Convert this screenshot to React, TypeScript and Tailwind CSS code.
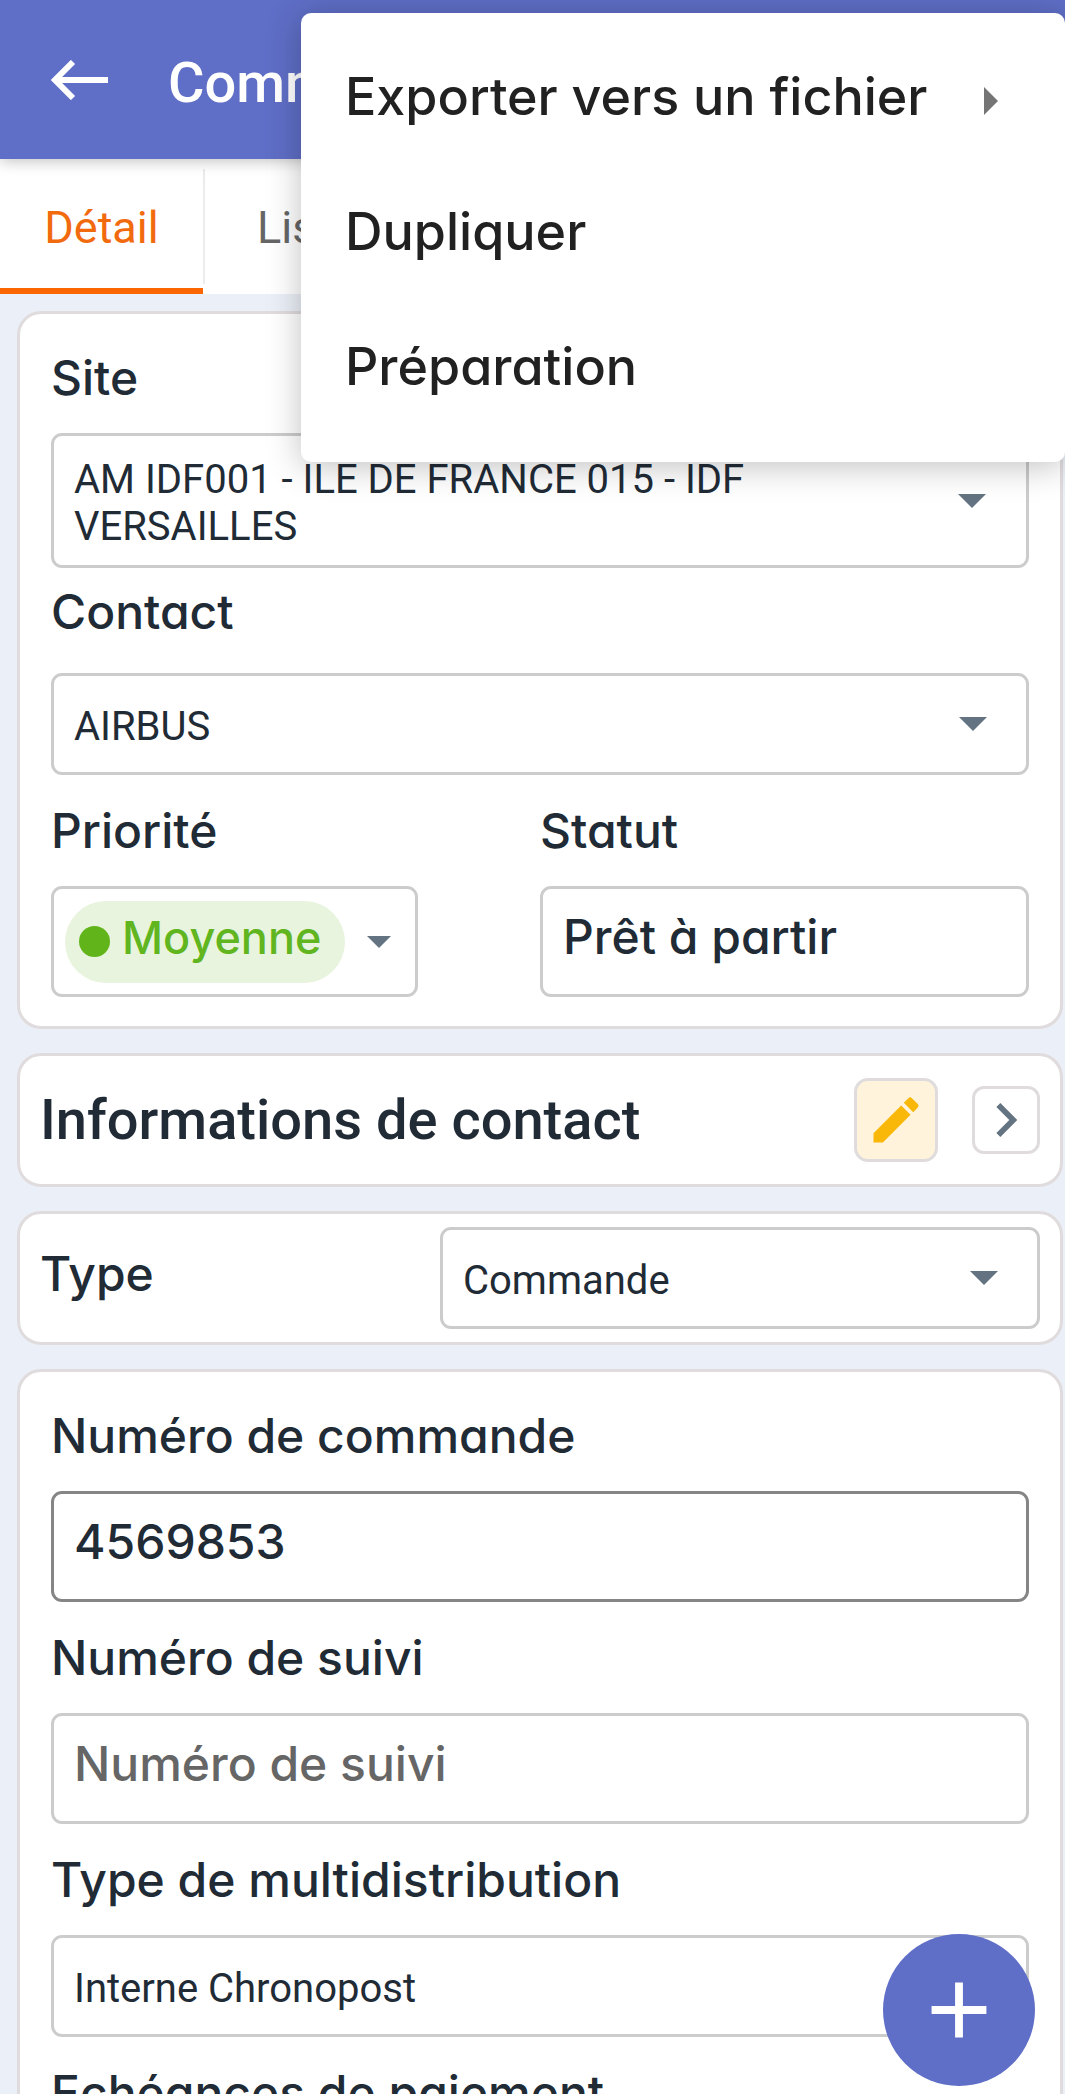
import { ReactNode } from "react";
import { clsx } from "clsx";
import { MdAdd, MdEdit } from "react-icons/md";

const fieldBox = "w-full rounded-[11px] border-3 border-[#cccccc] bg-white text-[#212b36]";
const inputText = "font-[Inter,sans-serif] text-[48px] font-medium [font-feature-settings:'cv11']";

function Caret({ className }: { className?: string }) {
  return (
    <svg
      viewBox="0 0 28 14"
      aria-hidden="true"
      className={clsx("pointer-events-none text-[#637381]", className ?? "h-[14px] w-7")}
    >
      <path d="M0 0h28L14 14z" fill="currentColor" />
    </svg>
  );
}

function Card({ children, className }: { children: ReactNode; className?: string }) {
  return (
    <section className={clsx("rounded-3xl border-3 border-[#e0dcde] bg-white", className)}>
      {children}
    </section>
  );
}

interface LabelProps {
  htmlFor: string;
  children: ReactNode;
  className?: string;
}

function Label({ htmlFor, children, className }: LabelProps) {
  return (
    <label
      htmlFor={htmlFor}
      className={clsx(inputText, "block leading-[64px] text-[#212b36]", className ?? "pt-6 pb-[23px]")}
    >
      {children}
    </label>
  );
}

function Select({ id, options }: { id: string; options: string[] }) {
  return (
    <div className="relative flex items-center">
      <select id={id} className={clsx(fieldBox, "h-[102px] appearance-none pt-1.5 pr-24 pl-5 text-[40px]")}>
        {options.map((option) => (
          <option key={option}>{option}</option>
        ))}
      </select>
      <Caret className="absolute right-[42px] h-[14px] w-7" />
    </div>
  );
}

interface PickerProps {
  id: string;
  value: string;
  children: ReactNode;
  className?: string;
}

// Rich content in the box, with the native select stretched over it
function Picker({ id, value, children, className }: PickerProps) {
  return (
    <div className={clsx(fieldBox, "relative flex items-center justify-between", className)}>
      {children}
      <select id={id} className="absolute inset-0 h-full w-full opacity-0">
        <option>{value}</option>
      </select>
    </div>
  );
}

function TextInput({ id, className, ...props }: React.InputHTMLAttributes<HTMLInputElement>) {
  return (
    <input
      id={id}
      className={clsx(fieldBox, inputText, "h-[111px] px-5 pb-2.5 placeholder:text-[#666666]", className)}
      {...props}
    />
  );
}

const menuItems = [
  { label: "Exporter vers un fichier", submenu: true },
  { label: "Dupliquer" },
  { label: "Préparation" },
];

function ActionMenu() {
  return (
    <ul
      role="menu"
      className="absolute top-[13px] right-0 left-[301px] z-20 rounded-[10px] bg-white pt-4 pb-7 shadow-[0_4px_34px_rgba(0,0,0,0.25)]"
    >
      {menuItems.map(({ label, submenu }) => (
        <li key={label} role="none">
          <button
            role="menuitem"
            className="flex h-[135px] w-full items-center justify-between pr-[67px] pl-11 font-[Inter,sans-serif] text-[52px] font-medium text-[#212121] [font-feature-settings:'cv11']"
          >
            {label}
            {submenu && (
              <svg viewBox="0 0 14 28" aria-hidden="true" className="mt-2 h-7 w-[14px] text-[#757575]">
                <path d="M0 0v28l14-14z" fill="currentColor" />
              </svg>
            )}
          </button>
        </li>
      ))}
    </ul>
  );
}

export default function App() {
  return (
    <div className="relative flex h-screen flex-col overflow-hidden bg-[#ebeff7] font-[Roboto,sans-serif] text-[#212b36]">
      <header className="z-10 flex h-[159px] shrink-0 items-center bg-[#5f6ec6] pl-[51px] text-white shadow-[0_2px_14px_rgba(0,0,0,0.25)]">
        <button aria-label="Retour" className="mr-[60px]">
          <svg viewBox="0 0 57 40" className="h-10 w-[57px]" fill="none" stroke="currentColor" strokeWidth="6">
            <path d="M57 20H5M22 2L4 20l18 18" />
          </svg>
        </button>
        <h1 className="pt-1.5 text-[56px] font-medium">Commande</h1>
      </header>

      <nav className="flex h-[135px] shrink-0 bg-white text-[45px]">
        <a href="#detail" className="flex w-[203px] items-center justify-center border-b-6 border-[#fb6502] pt-2 text-[#f26a0e]">
          Détail
        </a>
        <a href="#liste" className="my-[10px] flex items-center border-l-2 border-[#ececec] px-[52px] pt-0.5 text-[#666666]">
          Liste
        </a>
      </nav>

      <main className="flex flex-1 flex-col gap-6 overflow-y-auto pt-[17px] pr-0.5 pl-[17px] [scrollbar-width:none]">
        <Card className="px-[31px] pt-2 pb-[29px]">
          <Label htmlFor="site">Site</Label>
          <Picker id="site" value="AM IDF001 - ILE DE FRANCE 015 - IDF VERSAILLES" className="h-[135px] pr-10 pl-5">
            <span className="max-w-[760px] pt-1 text-[40px] leading-[47px]">
              AM IDF001 - ILE DE FRANCE 015 - IDF VERSAILLES
            </span>
            <Caret />
          </Picker>

          <Label htmlFor="contact" className="pt-3 pb-[29px]">Contact</Label>
          <Select id="contact" options={["AIRBUS"]} />

          <div className="grid grid-cols-2">
            <div>
              <Label htmlFor="priorite">Priorité</Label>
              <div className="w-3/4">
                <Picker id="priorite" value="Moyenne" className="h-[111px] pr-6 pl-[11px]">
                  <span className="flex h-[82px] items-center gap-3 rounded-full bg-[#e8f4de] pr-6 pl-[14px] font-[Inter,sans-serif] text-[45px] font-medium text-[#61b51f] [font-feature-settings:'cv11']">
                    <span className="size-[31px] rounded-full bg-[#61b51b]" />
                    <span className="pb-2">Moyenne</span>
                  </span>
                  <Caret className="h-3 w-6" />
                </Picker>
              </div>
            </div>
            <div>
              <Label htmlFor="statut">Statut</Label>
              <TextInput id="statut" defaultValue="Prêt à partir" />
            </div>
          </div>
        </Card>

        <Card className="flex h-[134px] shrink-0 items-center px-5">
          <h2 className="flex-1 text-[56px] font-medium">Informations de contact</h2>
          <button
            aria-label="Modifier"
            className="mr-[34px] flex size-[84px] items-center justify-center rounded-[14px] border-3 border-[#e0dcde] bg-[#fff3db] text-[#f9b707]"
          >
            <MdEdit className="size-[60px]" />
          </button>
          <button
            aria-label="Ouvrir"
            className="flex size-[68px] items-center justify-center rounded-xl border-3 border-[#e0dcde] text-[#637381]"
          >
            <svg viewBox="1 1 22 22" className="size-[62px]">
              <path d="M10 6L8.59 7.41 13.17 12l-4.58 4.59L10 18l6-6z" fill="currentColor" />
            </svg>
          </button>
        </Card>

        <Card className="flex items-center px-5 py-[13px]">
          <Label htmlFor="type" className="w-2/5 pb-2">Type</Label>
          <div className="w-3/5">
            <Select id="type" options={["Commande"]} />
          </div>
        </Card>

        <Card className="px-[31px] pt-2 pb-[29px]">
          <Label htmlFor="numero-commande">Numéro de commande</Label>
          <TextInput id="numero-commande" defaultValue="4569853" className="border-[#858585]!" />

          <Label htmlFor="numero-suivi">Numéro de suivi</Label>
          <TextInput id="numero-suivi" placeholder="Numéro de suivi" />

          <Label htmlFor="multidistribution">Type de multidistribution</Label>
          <Select id="multidistribution" options={["Interne Chronopost"]} />

          <Label htmlFor="echeances">Echéances de paiement</Label>
          <TextInput id="echeances" />
        </Card>
      </main>

      <ActionMenu />

      <button
        aria-label="Ajouter"
        className="absolute right-[30px] bottom-2 z-10 flex size-[152px] items-center justify-center rounded-full bg-[#5f6ec6] text-white"
      >
        <MdAdd className="size-[94px]" />
      </button>
    </div>
  );
}
